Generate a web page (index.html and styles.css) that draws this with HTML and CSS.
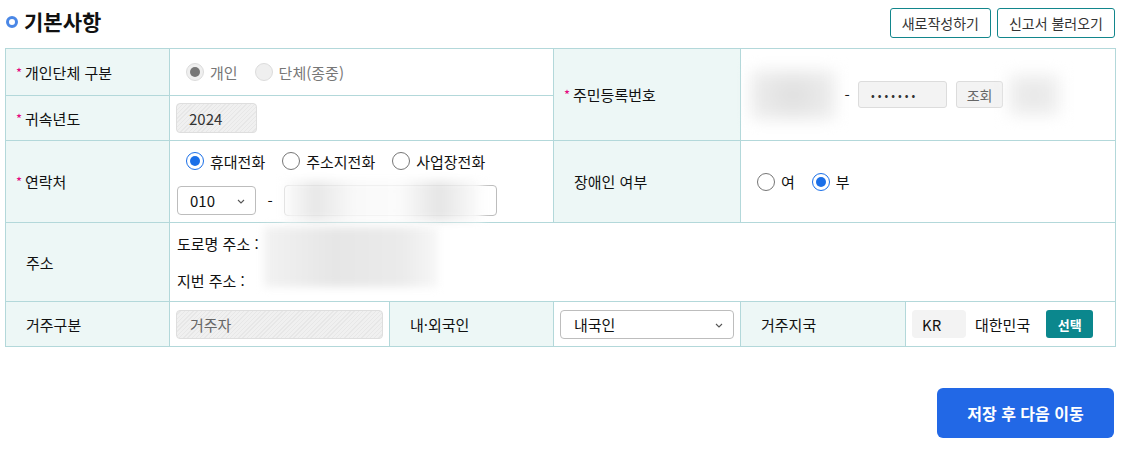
FILE: index.html
```html
<!DOCTYPE html>
<html lang="ko">
<head>
<meta charset="utf-8">
<title>기본사항</title>
<link rel="stylesheet" href="styles.css">
</head>
<body>
<div class="page">
  <header class="head">
    <h2 class="title"><span class="ring"></span>기본사항</h2>
    <div class="actions">
      <button class="btn-line">새로작성하기</button>
      <button class="btn-line">신고서 불러오기</button>
    </div>
  </header>

  <table class="form">
    <colgroup>
      <col class="c1"><col class="c2"><col class="c3"><col class="c4"><col class="c5"><col class="c6">
    </colgroup>
    <tr class="r1">
      <th><span class="req">*</span>개인단체 구분</th>
      <td colspan="2">
        <div class="radios">
          <label class="radio disabled"><span class="circle on"></span>개인</label>
          <label class="radio disabled"><span class="circle"></span>단체(종중)</label>
        </div>
      </td>
      <th rowspan="2"><span class="req">*</span>주민등록번호</th>
      <td colspan="2" rowspan="2">
        <div class="jumin">
          <span class="blur blur-a"></span>
          <span class="dash">-</span>
          <span class="pw">•••••••</span>
          <span class="btn-gray">조회</span>
          <span class="blur blur-b"></span>
        </div>
      </td>
    </tr>
    <tr class="r2">
      <th><span class="req">*</span>귀속년도</th>
      <td colspan="2"><span class="ro ro-year">2024</span></td>
    </tr>
    <tr class="r3">
      <th><span class="req">*</span>연락처</th>
      <td colspan="2">
        <div class="radios">
          <label class="radio"><span class="circle blue"></span>휴대전화</label>
          <label class="radio"><span class="circle"></span>주소지전화</label>
          <label class="radio"><span class="circle"></span>사업장전화</label>
        </div>
        <div class="phone">
          <span class="select sel-tel">010<svg class="chev" viewBox="0 0 8 5" width="8" height="5"><path d="M1 1l3 3 3-3" fill="none" stroke="#555" stroke-width="1.1"/></svg></span>
          <span class="dash">-</span>
          <span class="tel-input"><span class="blur blur-tel"></span></span>
        </div>
      </td>
      <th class="plain">장애인 여부</th>
      <td colspan="2">
        <div class="radios">
          <label class="radio"><span class="circle"></span>여</label>
          <label class="radio"><span class="circle blue"></span>부</label>
        </div>
      </td>
    </tr>
    <tr class="r4">
      <th class="plain">주소</th>
      <td colspan="5">
        <div class="addr">
          <span class="blur blur-addr"></span>
          <div class="addr-line">도로명 주소 :</div>
          <div class="addr-line">지번 주소 :</div>
        </div>
      </td>
    </tr>
    <tr class="r5">
      <th class="plain">거주구분</th>
      <td><span class="ro ro-wide">거주자</span></td>
      <th class="plain">내·외국인</th>
      <td><span class="select sel-nat">내국인<svg class="chev" viewBox="0 0 8 5" width="8" height="5"><path d="M1 1l3 3 3-3" fill="none" stroke="#555" stroke-width="1.1"/></svg></span></td>
      <th class="plain">거주지국</th>
      <td>
        <div class="country">
          <span class="code">KR</span>
          <span class="cname">대한민국</span>
          <button class="btn-teal">선택</button>
        </div>
      </td>
    </tr>
  </table>

  <div class="foot">
    <button class="btn-primary">저장 후 다음 이동</button>
  </div>
</div>
</body>
</html>
```

FILE: styles.css
```css
* { box-sizing: border-box; }

html, body {
  margin: 0;
  padding: 0;
  background: #fff;
}

body {
  font-family: "Noto Sans CJK KR", "Noto Sans", sans-serif;
  font-size: 15px;
  color: #111;
}

.page {
  width: 1122px;
  padding: 0 7px 0 5px;
}

/* header */
.head {
  display: flex;
  align-items: center;
  justify-content: space-between;
  height: 38px;
  padding-top: 8px;
  margin-bottom: 10px;
}

.title {
  display: flex;
  align-items: center;
  margin: 0;
  font-size: 21px;
  font-weight: 700;
  color: #111;
  line-height: 1;
  margin-top: -4px;
}

.ring {
  width: 12px;
  height: 12px;
  border: 3px solid #4a87e6;
  border-radius: 50%;
  margin: 2px 6px 0 1px;
}

.actions {
  display: flex;
  gap: 6px;
}

.btn-line {
  height: 30px;
  padding: 0 11px;
  border: 1px solid #12868c;
  border-radius: 3px;
  background: #fff;
  font-family: inherit;
  font-size: 14px;
  color: #333;
  line-height: 1;
}

/* table */
.form {
  width: 1110px;
  border-collapse: collapse;
  table-layout: fixed;
}

.c1 { width: 164px; }
.c2 { width: 220px; }
.c3 { width: 164px; }
.c4 { width: 187px; }
.c5 { width: 165px; }
.c6 { width: 210px; }

.form th,
.form td {
  border: 1px solid #b3d8da;
  padding: 0 0 0 6px;
  vertical-align: middle;
  text-align: left;
}

.form th {
  background: #edf7f6;
  font-weight: 400;
  padding-left: 10px;
  color: #111;
}

.form th.plain {
  padding-left: 20px;
}

.r1 { height: 47px; }
.r2 { height: 45px; }
.r3 { height: 82px; }
.r4 { height: 79px; }
.r5 { height: 45px; }

.req {
  display: inline-block;
  color: #e5007e;
  font-size: 13px;
  width: 9px;
  vertical-align: 1px;
}

/* radios */
.radios {
  display: flex;
  align-items: center;
  gap: 17px;
  padding-left: 10px;
}

.radio {
  display: flex;
  align-items: center;
  gap: 6px;
  color: #111;
}

.radio.disabled {
  color: #777;
}

.circle {
  position: relative;
  width: 18px;
  height: 18px;
  border: 1px solid #767676;
  border-radius: 50%;
  background: #fff;
}

.radio.disabled .circle {
  border-color: #dcdcdc;
  background: #efefef;
}

.circle.on::after,
.circle.blue::after {
  content: "";
  position: absolute;
  left: 3px;
  top: 3px;
  width: 10px;
  height: 10px;
  border-radius: 50%;
  background: #777;
}

.circle.blue {
  border-color: #1a6fe8;
}

.circle.blue::after {
  background: #1a6fe8;
}

/* phone */
.phone {
  display: flex;
  align-items: center;
  margin-top: 13px;
  margin-left: 1px;
  margin-bottom: -3px;
}

.dash {
  display: inline-block;
  width: 28px;
  text-align: center;
  color: #111;
}

.select {
  position: relative;
  display: inline-flex;
  align-items: center;
  height: 29px;
  border: 1px solid #bdbdbd;
  border-radius: 4px;
  background: #fff;
  padding-left: 12px;
  color: #111;
}

.chev {
  position: absolute;
  right: 10px;
  top: 12px;
}

.sel-tel { width: 79px; }
.sel-nat { width: 174px; height: 29px; padding-left: 13px; }

.tel-input {
  position: relative;
  display: inline-block;
  width: 213px;
  height: 31px;
  border: 1px solid #bdbdbd;
  border-radius: 4px;
  background: #fff;
}

.blur {
  display: inline-block;
  background: #e3e3e3;
  filter: blur(7px);
}

.blur-tel {
  position: absolute;
  left: -2px;
  top: -5px;
  width: 200px;
  height: 40px;
  filter: blur(5px);
  background: linear-gradient(90deg, #fdfdfd, #e7e7e7 16%, #f9f9f9 36%, #fbfbfb 58%, #e5e5e5 78%, #fdfdfd);
}

/* jumin */
.jumin {
  display: flex;
  align-items: center;
  padding-left: 3px;
}

.blur-a {
  width: 86px;
  height: 52px;
  background: radial-gradient(ellipse at center, #dedede 0%, #e9e9e9 50%, #f5f5f5 100%);
}

.jumin .dash {
  width: 22px;
  margin-left: 0;
}

.pw {
  display: inline-flex;
  align-items: center;
  width: 89px;
  height: 27px;
  padding-left: 12px;
  background: #f3f3f3;
  border: 1px solid #dcdcdc;
  border-radius: 3px;
  font-size: 11px;
  letter-spacing: 3px;
  color: #333;
}

.btn-gray {
  display: inline-flex;
  align-items: center;
  justify-content: center;
  width: 47px;
  height: 27px;
  margin-left: 9px;
  background: #f3f3f3;
  border: 1px solid #dcdcdc;
  border-radius: 3px;
  color: #666;
  font-size: 14px;
}

.blur-b {
  width: 54px;
  height: 44px;
  margin-left: 4px;
  background: radial-gradient(ellipse at center, #e6e6e6 0%, #f0f0f0 60%, #f8f8f8 100%);
}

/* read-only hatched inputs */
.ro {
  display: inline-flex;
  align-items: center;
  height: 30px;
  border: 1px solid #dedede;
  border-radius: 4px;
  background: repeating-linear-gradient(-45deg, #f0f0f0 0 2px, #e7e7e7 2px 3px);
  color: #333;
}

.ro-year {
  width: 81px;
  padding-left: 12px;
}

.ro-wide {
  width: 207px;
  height: 29px;
  padding-left: 13px;
  color: #666;
}

/* address */
.addr {
  position: relative;
  padding-left: 1px;
}

.addr-line {
  position: relative;
  height: 37px;
  line-height: 37px;
}

.blur-addr {
  position: absolute;
  left: 88px;
  top: 2px;
  width: 174px;
  height: 60px;
  background: linear-gradient(90deg, #f2f2f2, #e6e6e6 40%, #ebebeb 80%, #f7f7f7);
  filter: blur(4px);
}

/* country */
.country {
  display: flex;
  align-items: center;
}

.code {
  display: inline-flex;
  align-items: center;
  width: 54px;
  height: 28px;
  padding-left: 10px;
  background: #f3f3f3;
  border-radius: 4px;
  color: #111;
}

.cname {
  margin-left: 9px;
}

.btn-teal {
  height: 28px;
  width: 47px;
  margin-left: 16px;
  border: 0;
  border-radius: 3px;
  background: #0b878d;
  color: #fff;
  font-family: inherit;
  font-weight: 700;
  font-size: 13px;
}

/* footer */
.foot {
  display: flex;
  justify-content: flex-end;
  margin-top: 41px;
  padding-right: 1px;
}

.btn-primary {
  width: 177px;
  height: 50px;
  border: 0;
  border-radius: 6px;
  background: #2268e6;
  color: #fff;
  font-family: inherit;
  font-size: 16px;
  font-weight: 700;
}
```
